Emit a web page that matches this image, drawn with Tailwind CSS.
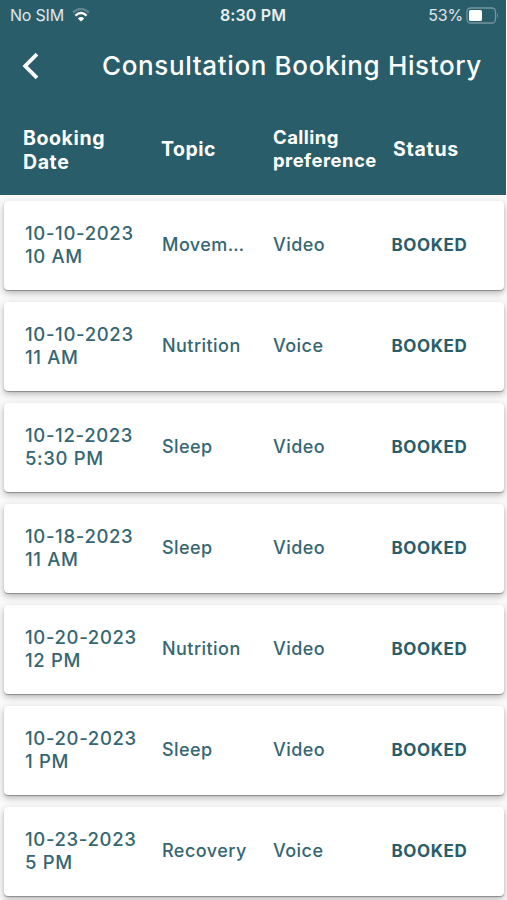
<!DOCTYPE html>
<html lang="en">
<head>
  <meta charset="UTF-8" />
  <title>Consultation Booking History</title>
  <script src="https://cdn.jsdelivr.net/npm/@tailwindcss/browser@4"></script>
</head>
<body class="bg-white h-[900px] overflow-hidden font-['Inter',sans-serif]">
  <header class="bg-[#295d6a] h-[195px] mr-px text-white">
    <!-- Status bar -->
    <div class="grid grid-cols-3 items-center h-[30px] pl-[10px] pr-[7px] text-[16px] whitespace-nowrap">
      <div class="flex items-center gap-2 text-white/85">
        <span class="tracking-[-0.2px]">No SIM</span>
        <svg class="w-[18px] h-[14px]" viewBox="0 0 18 14" fill="none" stroke="white" stroke-width="2.4">
          <path d="M1 4.5Q9-2.5 17 4.5" stroke-opacity=".25" />
          <path d="M3.4 7.6Q9 2.6 14.6 7.6" />
          <path d="M5.8 10.4Q9 7.6 12.2 10.4L9 13.6Z" fill="white" stroke="none" />
        </svg>
      </div>
      <div class="pr-[3px] text-center font-semibold text-white/90 tracking-[0.15px]">8:30 PM</div>
      <div class="flex items-center justify-end gap-[3px] text-white/85">
        <span class="tracking-[-0.2px]">53%</span>
        <svg class="w-[33px] h-[17px]" viewBox="0 0 33 17">
          <rect x="1" y="1" width="28.5" height="15" rx="3.5" fill="none" stroke="white" stroke-opacity=".35" stroke-width="1.3" />
          <rect x="3" y="3" width="13" height="11" rx="1.5" fill="white" />
          <path d="M31 6Q33 8.5 31 11Z" fill="white" fill-opacity=".35" />
        </svg>
      </div>
    </div>

    <div class="flex items-center h-[71px] pl-[22px]">
      <svg class="w-[18px] h-[28px]" viewBox="0 0 18 28" fill="none" stroke="white" stroke-width="3.8">
        <path d="M15 2.2L3.2 14L15 25.8" />
      </svg>
      <h1 class="ml-[62px] text-[26px] font-medium tracking-[0.63px] whitespace-nowrap">Consultation Booking History</h1>
    </div>

    <div class="grid grid-cols-[138px_112px_120px_1fr] items-center h-[96px] pl-[23px] text-[19.5px] font-bold">
      <div class="pt-[2px] leading-6 tracking-[0.6px]">Booking<br />Date</div>
      <div class="pt-[2px] tracking-[0.5px]">Topic</div>
      <div class="text-[18.5px] leading-[23px] tracking-[0.45px]">Calling<br />preference</div>
      <div class="pt-[2px] tracking-[0.75px]">Status</div>
    </div>
  </header>

  <main id="bookings" class="flex flex-col gap-3 px-1 pt-[6px] pb-1 bg-[#fafafa]"></main>

  <script>
    const bookings = [
      ["10-10-2023", "10 AM", "Movement", "Video"],
      ["10-10-2023", "11 AM", "Nutrition", "Voice"],
      ["10-12-2023", "5:30 PM", "Sleep", "Video"],
      ["10-18-2023", "11 AM", "Sleep", "Video"],
      ["10-20-2023", "12 PM", "Nutrition", "Video"],
      ["10-20-2023", "1 PM", "Sleep", "Video"],
      ["10-23-2023", "5 PM", "Recovery", "Voice"],
    ];

    document.getElementById("bookings").innerHTML = bookings.map(([date, time, topic, call]) => `
      <div class="grid grid-cols-[137px_111px_118.5px_1fr] items-center h-[89px] w-[500px] pl-[21px] pb-[2px] rounded-[4px] bg-white text-[18px] font-medium text-[#356672] shadow-[0_1px_1px_rgba(0,0,0,0.3),0_3px_7px_rgba(0,0,0,0.28)]">
        <div class="text-[18.5px] leading-[23px] tracking-[0.65px]">${date}<br />${time}</div>
        <div class="w-[87px] truncate tracking-[0.45px]">${topic}</div>
        <div class="tracking-[0.45px]">${call}</div>
        <div class="pt-[2px] text-[17px] font-bold tracking-[0.6px] text-[#295d6a]">BOOKED</div>
      </div>`
    ).join("");
  </script>
</body>
</html>
